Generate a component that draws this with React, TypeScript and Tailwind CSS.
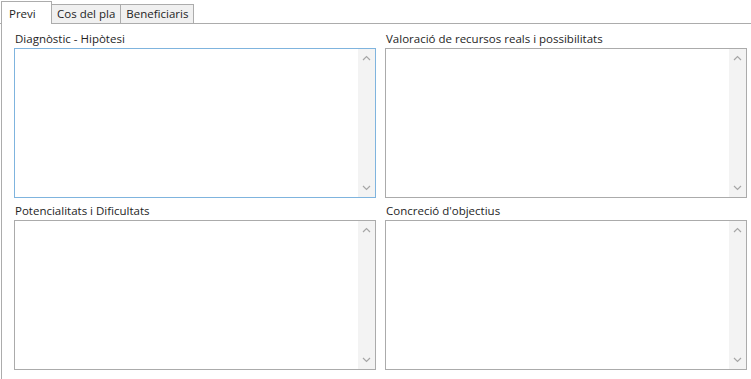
import React from "react";

const tabs = ["Previ", "Cos del pla", "Beneficiaris"];

const fields = [
  "Diagnòstic - Hipòtesi",
  "Valoració de recursos reals i possibilitats",
  "Potencialitats i Dificultats",
  "Concreció d'objectius",
];

const Chevron = ({ up }: { up?: boolean }) => (
  <svg width="9" height="6" viewBox="0 0 9 6" className="block">
    <path
      d={up ? "M1 5 L4.5 1.5 L8 5" : "M1 1 L4.5 4.5 L8 1"}
      fill="none"
      stroke="#a6a6a6"
      strokeWidth="1.2"
    />
  </svg>
);

const Memo = ({ label, focused }: { label: string; focused?: boolean }) => {
  return (
    <div className="flex flex-col">
      <label className="h-[15px] mb-[2px] pl-[1px] text-[11.5px] leading-[15px] text-[#1e1e1e]">
        {label}
      </label>
      <div
        className={
          "flex h-[150px] bg-white border " +
          (focused ? "border-[#7fb4de]" : "border-[#ababab]")
        }
      >
        <textarea className="flex-1 resize-none outline-none bg-white" />
        <div className="w-[17px] bg-[#f3f3f3] flex flex-col items-center justify-between py-[6px]">
          <Chevron up />
          <Chevron />
        </div>
      </div>
    </div>
  );
};

export default function App() {
  return (
    <div
      className="w-[751px] h-[379px] bg-white overflow-hidden"
      style={{ fontFamily: '"Open Sans", "Noto Sans", sans-serif' }}
    >
      <div className="flex items-end h-[24px] pl-[1px] border-b border-[#acacac]">
        {tabs.map((t, i) =>
          i === 0 ? (
            <div
              key={t}
              className="h-[23px] w-[51px] -mb-[1px] bg-white border border-b-0 border-[#acacac] pl-[7px] pt-[3px] text-[11.5px] text-[#1e1e1e] relative z-10"
            >
              {t}
            </div>
          ) : (
            <div
              key={t}
              className="h-[19px] bg-[#f0f0f0] border border-l-0 border-b-0 border-[#acacac] px-[5px] text-[11.5px] leading-[18px] text-[#1e1e1e]"
            >
              {t}
            </div>
          )
        )}
      </div>
      <div className="h-[355px] border-l border-[#acacac] ml-[1px] pl-[12px] pr-[4px] pt-[7px]">
        <div className="grid grid-cols-2 gap-x-[9px] gap-y-[5px]">
          {fields.map((f, i) => (
            <Memo key={f} label={f} focused={i === 0} />
          ))}
        </div>
      </div>
    </div>
  );
}
